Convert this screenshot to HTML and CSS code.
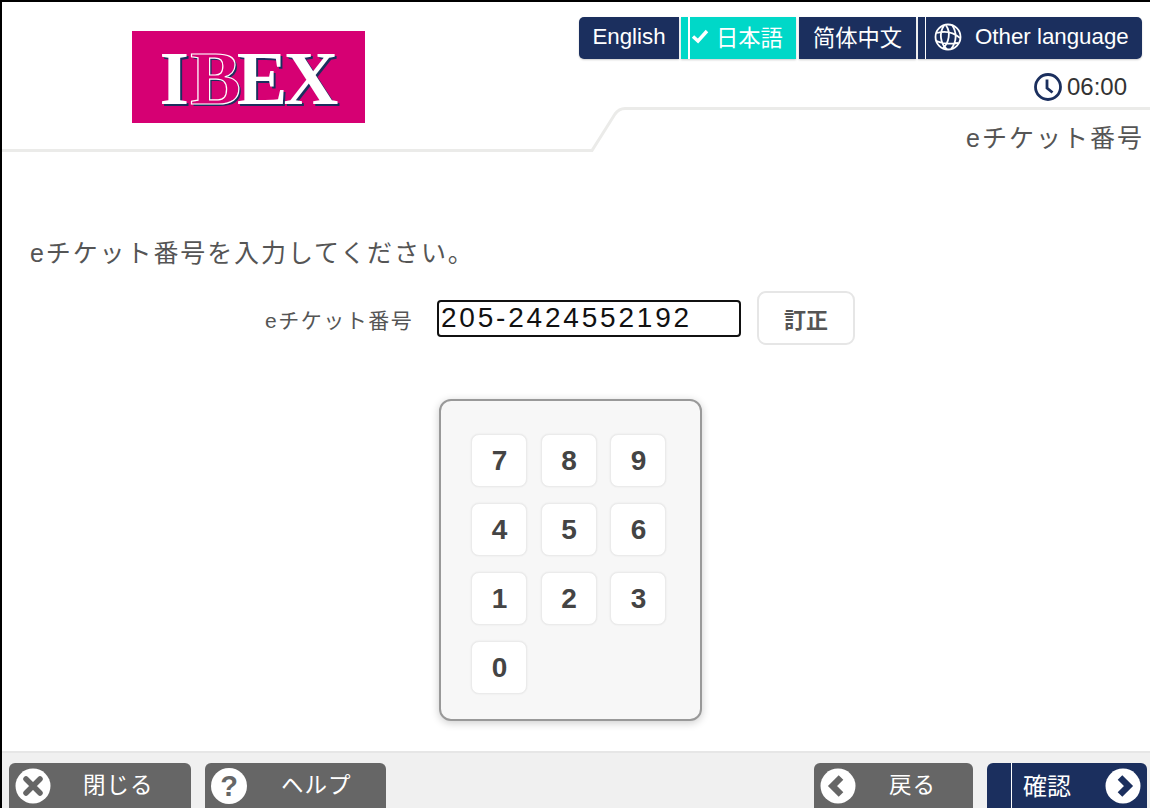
FILE: index.html
```html
<!DOCTYPE html>
<html lang="ja">
<head>
    <meta charset="UTF-8">
    <title>eチケット番号</title>
    <link rel="stylesheet" href="styles.css">
</head>
<body>
    <div class="screen">
        <header class="top">
            <svg class="tab-line" width="1148" height="150" viewBox="0 0 1148 150">
                <path d="M0 148.500H590L613 112Q617 106.500 623 106.500H1148" fill="none" stroke="#ebebe9" stroke-width="3"/>
            </svg>
            <div class="logo"><span>I</span><span class="logo-b">B</span><span>EX</span></div>
            <div class="top-right">
                <div class="langs">
                    <div class="lang lang-en">English</div>
                    <div class="lang lang-ja">
                        <svg width="18" height="16" viewBox="0 0 18 16"><path d="M2 8.500L7 13L16 3" fill="none" stroke="#fff" stroke-width="3.400"/></svg>
                        日本語
                    </div>
                    <div class="lang lang-zh">简体中文</div>
                    <div class="lang lang-other">
                        <svg width="28" height="28" viewBox="0 0 28 28" fill="none" stroke="#fff" stroke-width="1.800">
                            <circle cx="14" cy="14" r="12.500"/>
                            <path d="M10 2.500C5 10 6 20 13 26.500M18 2C23 9 23 19 17 26M3 10C10 8 19 9 26 15M2.500 18C9 21 17 21 24 20M12 2.500C17 9 15 20 9 25"/>
                        </svg>
                        <span>Other language</span>
                    </div>
                </div>
                <div class="clock">
                    <svg width="30" height="30" viewBox="0 0 30 30" fill="none" stroke="#1b2f5e" stroke-width="2.800">
                        <circle cx="15" cy="15" r="12.500"/>
                        <path d="M14 7.500V16L19.500 20.500"/>
                    </svg>
                    <span>06:00</span>
                </div>
                <div class="page-title">eチケット番号</div>
            </div>
        </header>

        <main class="content">
            <p class="intro">eチケット番号を入力してください。</p>
            <div class="form-row">
                <label class="form-label">eチケット番号</label>
                <div class="ticket-input">205-2424552192</div>
                <button class="fix-btn">訂正</button>
            </div>
            <div class="keypad">
                <button class="key">7</button>
                <button class="key">8</button>
                <button class="key">9</button>
                <button class="key">4</button>
                <button class="key">5</button>
                <button class="key">6</button>
                <button class="key">1</button>
                <button class="key">2</button>
                <button class="key">3</button>
                <button class="key">0</button>
            </div>
        </main>

        <footer class="bottom">
            <div class="btn-group">
                <button class="nav-btn btn-close">
                    <svg class="nav-icon" width="36" height="36" viewBox="0 0 36 36">
                        <circle cx="18" cy="18" r="17.500" fill="#fff"/>
                        <path d="M11 11L25 25M25 11L11 25" stroke="#666" stroke-width="5.500" stroke-linecap="round"/>
                    </svg>
                    <span>閉じる</span>
                </button>
                <button class="nav-btn btn-help">
                    <span class="help-icon">?</span>
                    <span>ヘルプ</span>
                </button>
            </div>
            <div class="btn-group">
                <button class="nav-btn btn-back">
                    <svg class="nav-icon" width="36" height="36" viewBox="0 0 36 36">
                        <circle cx="18" cy="18" r="17.500" fill="#fff"/>
                        <path d="M21 9.500L12.500 18L21 26.500" fill="none" stroke="#666" stroke-width="6.500"/>
                    </svg>
                    <span>戻る</span>
                </button>
                <button class="nav-btn btn-ok">
                    <span>確認</span>
                    <svg class="nav-icon" width="36" height="36" viewBox="0 0 36 36">
                        <circle cx="18" cy="18" r="17.500" fill="#fff"/>
                        <path d="M15 9.500L23.500 18L15 26.500" fill="none" stroke="#1b2f5e" stroke-width="6.500"/>
                    </svg>
                </button>
            </div>
        </footer>
    </div>
</body>
</html>
```

FILE: styles.css
```css
* {
    box-sizing: border-box;
}
html, body {
    margin: 0;
    height: 100%;
    overflow: hidden;
}
body {
    font-family: "Liberation Sans", "Noto Sans CJK JP", sans-serif;
    color: #555;
    background: #fff;
}
button {
    font-family: inherit;
    padding: 0;
    cursor: pointer;
}
.screen {
    height: 808px;
    border-top: 2px solid #000;
    border-left: 2px solid #000;
    display: flex;
    flex-direction: column;
    overflow: hidden;
}

/* header */
.top {
    height: 150px;
    display: flex;
    justify-content: space-between;
    position: relative;
    flex-shrink: 0;
}
.tab-line {
    position: absolute;
    left: 0;
    top: 0;
}
.logo {
    width: 233px;
    height: 92px;
    margin: 29px 0 0 130px;
    background: #d60073;
    color: #fff;
    font-family: "Liberation Serif", serif;
    font-weight: bold;
    font-size: 76px;
    line-height: 94px;
    letter-spacing: -4px;
    text-indent: -3px;
    text-align: center;
    text-shadow: 2px 2px 0 #1b2f5e;
}
.logo-b {
    margin-left: 5px;
    color: #d60073;
    -webkit-text-stroke: 1.2px #fff;
}
.top-right {
    display: flex;
    flex-direction: column;
    align-items: flex-end;
    padding: 15px 8px 0 0;
    position: relative;
}
.top-right > * {
    flex-shrink: 0;
}
.langs {
    display: flex;
    height: 42px;
    color: #fff;
    font-size: 22.300px;
}
.lang {
    display: flex;
    align-items: center;
    justify-content: center;
    padding-bottom: 2px;
    background: #1b2f5e;
    box-shadow: 0 1px 2px rgba(0,0,0,0.2);
}
.lang-en {
    width: 100px;
    border-radius: 5px 0 0 5px;
}
.lang-ja {
    width: 115px;
    margin-left: 2px;
    justify-content: flex-start;
    gap: 7px;
    padding: 0 0 5px 10px;
    background: linear-gradient(to right, #00d8c8 7px, #fff 7px, #fff 9px, #00d8c8 9px);
}
.lang-zh {
    width: 117px;
    margin-left: 3px;
    padding-bottom: 5px;
}
.lang-other {
    width: 224px;
    margin-left: 2px;
    justify-content: flex-start;
    gap: 13px;
    padding-left: 16px;
    border-radius: 0 5px 5px 0;
    background: linear-gradient(to right, #1b2f5e 7px, #fff 7px, #fff 8px, #1b2f5e 8px);
}
.clock {
    display: flex;
    align-items: center;
    gap: 4px;
    margin: 13px 15px 0 0;
    font-size: 24px;
    color: #333;
}
.page-title {
    margin: 19px -2px 0 0;
    font-size: 25px;
    letter-spacing: 2px;
    line-height: 34px;
}

/* main area */
.content {
    flex: 1;
    min-height: 0;
}
.intro {
    margin: 83px 0 0 28px;
    font-size: 25px;
    line-height: 36px;
    letter-spacing: 1.900px;
}
.form-row {
    display: flex;
    align-items: center;
    margin: 20px 0 0 263px;
}
.form-label {
    width: 172px;
    padding-top: 1px;
    font-size: 21px;
    letter-spacing: 1.500px;
}
.ticket-input {
    width: 304px;
    height: 37px;
    padding-left: 2px;
    border: 2px solid #111;
    border-radius: 4px;
    background: #fff;
    color: #111;
    font-size: 28px;
    line-height: 31px;
    letter-spacing: 2.800px;
}
.fix-btn {
    width: 98px;
    height: 54px;
    margin-left: 16px;
    background: #fff;
    color: #555;
    border: 2px solid #e6e6e6;
    border-radius: 9px;
    font-size: 22px;
    font-weight: bold;
}
.keypad {
    width: 263px;
    height: 322px;
    margin: 54px 0 0 437px;
    padding: 33px 30px;
    display: grid;
    grid-template-columns: repeat(3, 56px);
    grid-auto-rows: 53px;
    column-gap: 13.500px;
    row-gap: 16px;
    background: #f7f7f7;
    border: 2px solid #999;
    border-radius: 12px;
    box-shadow: 0 2px 8px rgba(0,0,0,0.2);
}
.key {
    padding-left: 1px;
    background: #fff;
    border: 1px solid #ebebeb;
    border-radius: 8px;
    box-shadow: 0 0 2px rgba(0,0,0,0.08);
    color: #444;
    font-size: 28px;
    font-weight: bold;
}

/* footer */
.bottom {
    height: 57px;
    flex-shrink: 0;
    display: flex;
    justify-content: space-between;
    padding: 10px 3px 0 7px;
    background: #f0f0f0;
    border-top: 2px solid #e6e6e6;
}
.btn-group {
    display: flex;
    gap: 14px;
}
.nav-btn {
    height: 54px;
    display: flex;
    align-items: flex-start;
    border: none;
    border-radius: 6px;
    background: #666;
    color: #fff;
    font-size: 22.500px;
    letter-spacing: 1px;
    position: relative;
}
.nav-btn span {
    line-height: 46px;
}
.nav-icon {
    margin-top: 5px;
    flex-shrink: 0;
}
.btn-close {
    width: 182px;
    padding-left: 6px;
    gap: 32px;
}
.btn-help {
    width: 181px;
    padding-left: 6px;
    gap: 34px;
}
.btn-back {
    width: 159px;
    padding-left: 6px;
    gap: 33px;
}
.btn-ok {
    width: 160px;
    padding-left: 36px;
    gap: 34px;
    font-size: 24px;
    letter-spacing: 0;
    background: linear-gradient(to right, #1b2f5e 24px, #fff 24px, #fff 25px, #1b2f5e 25px);
}
.btn-ok span {
    line-height: 48px;
}
.help-icon {
    width: 36px;
    height: 36px;
    margin-top: 5px;
    border-radius: 50%;
    background: #fff;
    color: #666;
    font-size: 29px;
    font-weight: bold;
    letter-spacing: 0;
    text-align: center;
}
.nav-btn .help-icon {
    line-height: 36px;
}
```
